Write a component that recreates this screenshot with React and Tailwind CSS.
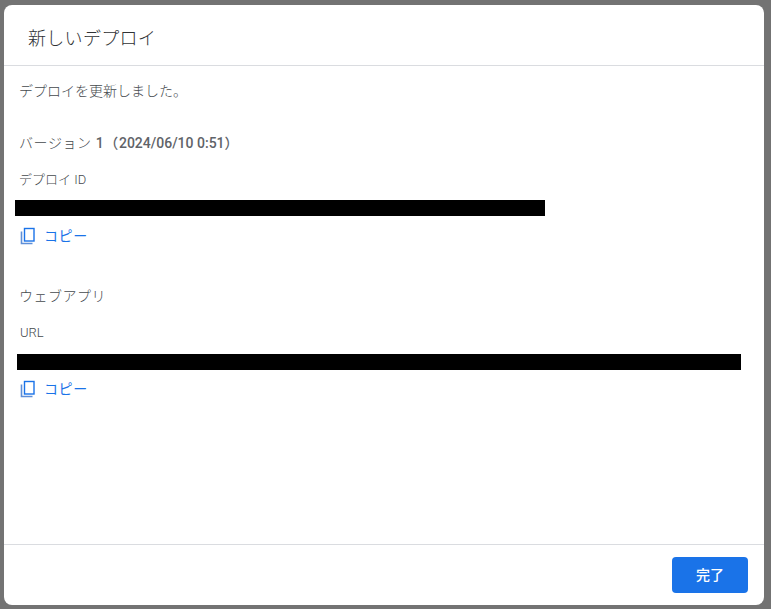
const FONT = "font-['Roboto','Noto_Sans_CJK_JP',sans-serif]";

function CopyIcon() {
  return (
    <svg width="18" height="18" viewBox="0 0 18 18" fill="none" className="shrink-0">
      <rect x="5.5" y="1.5" width="9.5" height="12.5" strokeWidth="1.4" stroke="#1a73e8" />
      <path d="M2.5 4.5v12h11" strokeWidth="1.6" stroke="#5f8fd8" />
    </svg>
  );
}

function CopyLink() {
  return (
    <div className="flex h-[20px] items-center gap-[7px] pl-[15px] text-[14px] font-normal tracking-[0.6px] text-[#1a73e8]">
      <CopyIcon />
      <span>コピー</span>
    </div>
  );
}

export default function App() {
  return (
    <div className={`flex h-[609px] w-[771px] bg-[#737373] pb-[4px] pl-[4px] pr-[7px] pt-[5px] ${FONT}`}>
      <div className="flex w-full flex-col rounded-[8px] bg-white">
        <header className="flex h-[61px] shrink-0 items-center border-b border-[#dadce0] pl-[24px] pt-[6px] text-[18px] tracking-[0.3px] text-[#2f3235]">
          <h1 className="font-light">新しいデプロイ</h1>
        </header>

        <main className="flex-1">
          <p className="mt-[15px] h-[20px] pl-[15px] text-[14px] font-light leading-[20px] text-[#45494d]">
            デプロイを更新しました。
          </p>

          <p className="mt-[32px] h-[20px] pl-[15px] text-[14px] font-light leading-[20px] tracking-[0.6px] text-[#45494d]">
            バージョン{" "}
            <span className="font-medium text-[#5f6368]">
              1（<span className="tracking-normal">2024/06/10 0:51）</span>
            </span>
          </p>
          <p className="mt-[19px] h-[16px] pl-[15px] text-[13px] font-light leading-[16px] text-[#45494d]">デプロイ ID</p>
          <div className="ml-[11px] mt-[12px] h-[16px] w-[530px] bg-black" />
          <div className="mt-[10px]">
            <CopyLink />
          </div>

          <p className="mt-[40px] h-[20px] pl-[15px] text-[14px] font-light leading-[20px] tracking-[0.5px] text-[#45494d]">ウェブアプリ</p>
          <p className="mt-[19px] h-[16px] pl-[16px] text-[13px] font-light leading-[16px] text-[#45494d]">URL</p>
          <div className="ml-[13px] mt-[13px] h-[16px] w-[724px] bg-black" />
          <div className="mt-[9px]">
            <CopyLink />
          </div>
        </main>

        <footer className="flex h-[61px] shrink-0 items-start justify-end border-t border-[#dadce0] pr-[16px] pt-[12px]">
          <button
            type="button"
            className="h-[36px] w-[76px] rounded-[4px] bg-[#1a73e8] text-[14px] font-medium text-white"
          >
            完了
          </button>
        </footer>
      </div>
    </div>
  );
}
